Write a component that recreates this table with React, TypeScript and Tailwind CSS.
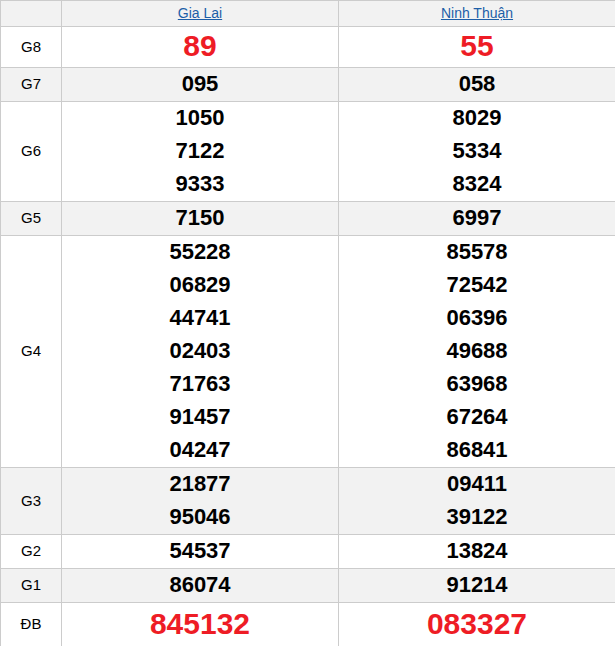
import React from "react";

type Row = { label: string; a: string[]; b: string[]; kind?: "big" | "db"; grey?: boolean };

const rows: Row[] = [
  { label: "G8", a: ["89"], b: ["55"], kind: "big" },
  { label: "G7", a: ["095"], b: ["058"], grey: true },
  { label: "G6", a: ["1050", "7122", "9333"], b: ["8029", "5334", "8324"] },
  { label: "G5", a: ["7150"], b: ["6997"], grey: true },
  {
    label: "G4",
    a: ["55228", "06829", "44741", "02403", "71763", "91457", "04247"],
    b: ["85578", "72542", "06396", "49688", "63968", "67264", "86841"],
  },
  { label: "G3", a: ["21877", "95046"], b: ["09411", "39122"], grey: true },
  { label: "G2", a: ["54537"], b: ["13824"] },
  { label: "G1", a: ["86074"], b: ["91214"], grey: true },
  { label: "ĐB", a: ["845132"], b: ["083327"], kind: "db" },
];

function Cell({ vals, kind }: { vals: string[]; kind?: "big" | "db" }) {
  if (kind === "big") {
    return (
      <td className="border border-[#cccccc] text-center p-0 text-[30px] font-bold text-[#ee1c25]">
        <div className="h-[40px] leading-[38px]">{vals[0]}</div>
      </td>
    );
  }
  if (kind === "db") {
    return (
      <td className="border border-[#cccccc] text-center p-0 text-[30px] font-bold text-[#ee1c25]">
        <div className="h-[43px] leading-[42px]">{vals[0]}</div>
      </td>
    );
  }
  return (
    <td className="border border-[#cccccc] text-center p-0 text-[22px] font-bold text-black">
      {vals.map((v, i) => (
        <div key={i} className="leading-[31px] h-[33px]">
          {v}
        </div>
      ))}
    </td>
  );
}

export default function App() {
  return (
    <div className="w-[615px] bg-white" style={{ fontFamily: '"Liberation Sans", Arial, sans-serif' }}>
      <table className="w-[615px] border-collapse table-fixed">
        <colgroup>
          <col className="w-[61px]" />
          <col className="w-[277px]" />
          <col className="w-[277px]" />
        </colgroup>
        <thead>
          <tr className="bg-[#f2f2f2]">
            <th className="border border-[#cccccc] p-0 h-[26px]"></th>
            <th className="border border-[#cccccc] p-0 h-[26px] text-[14px] font-normal">
              <a className="text-[#1d5ea8] underline">Gia Lai</a>
            </th>
            <th className="border border-[#cccccc] p-0 h-[26px] text-[14px] font-normal">
              <a className="text-[#1d5ea8] underline">Ninh Thuận</a>
            </th>
          </tr>
        </thead>
        <tbody>
          {rows.map((r) => (
            <tr key={r.label} className={r.grey ? "bg-[#f2f2f2]" : "bg-white"}>
              <td className="border border-[#cccccc] text-center text-[15px] text-black p-0">{r.label}</td>
              <Cell vals={r.a} kind={r.kind} />
              <Cell vals={r.b} kind={r.kind} />
            </tr>
          ))}
        </tbody>
      </table>
    </div>
  );
}
